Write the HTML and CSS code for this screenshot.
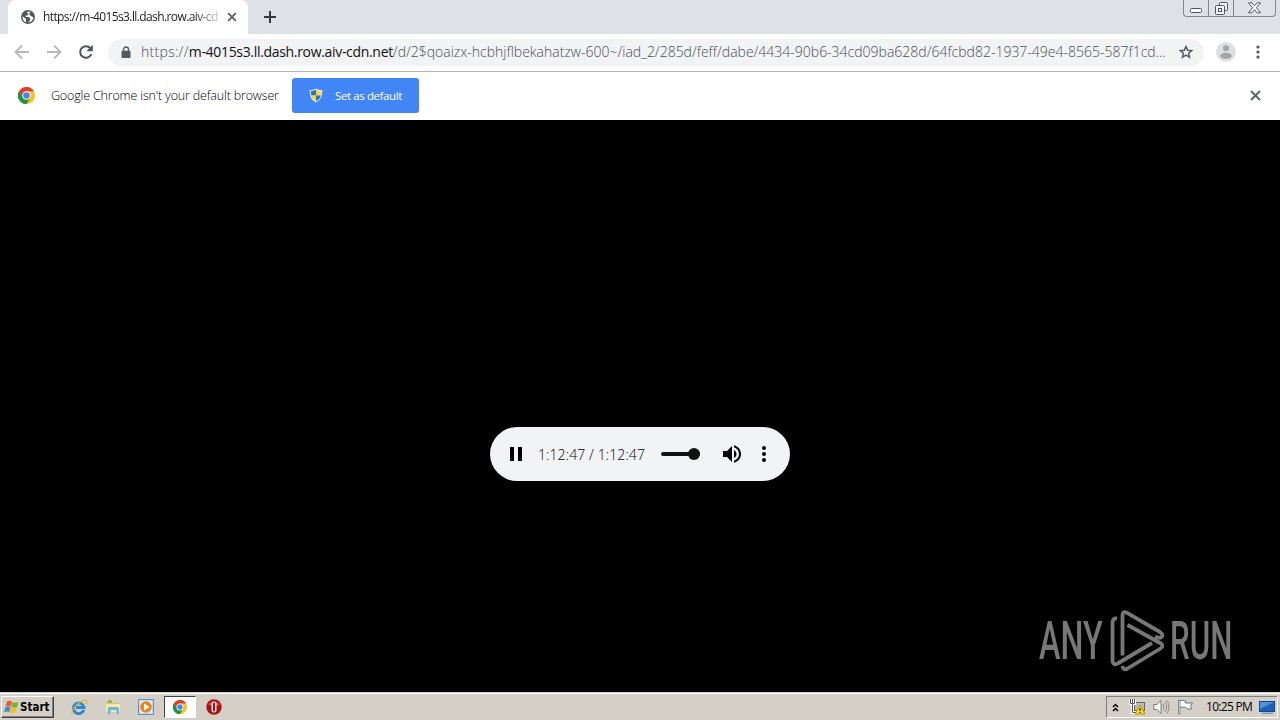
FILE: index.html
```html
<!DOCTYPE html>
<html lang="en">
<head>
  <meta charset="UTF-8">
  <meta name="viewport" content="width=device-width, initial-scale=1.0">
  <title>m-4015s3.ll.dash.row.aiv-cdn.net</title>
  <link rel="stylesheet" href="styles.css">
</head>
<body>
  <svg class="defs" width="0" height="0">
    <symbol id="chrome" viewBox="0 0 48 48">
      <circle cx="24" cy="24" r="24" fill="#fbc116"/>
      <path d="M24 24L3.2 12A24 24 0 0 1 44.8 12H24z" fill="#e33b2e"/>
      <path d="M3.2 12A24 24 0 0 0 24 48L34.4 30 24 24 13.6 30z" fill="#229342"/>
      <path d="M3.2 12L13.6 30 24 24 24 12z" fill="#e33b2e"/>
      <path d="M3.2 12L13.6 30 24 36 24 48A24 24 0 0 1 3.2 12z" fill="#229342"/>
      <circle cx="24" cy="24" r="12" fill="#fff"/>
      <circle cx="24" cy="24" r="9.2" fill="#4285f4"/>
    </symbol>
  </svg>

  <div class="tabstrip">
    <div class="tab">
      <svg class="globe" width="14" height="14" viewBox="0 0 14 14">
        <circle cx="7" cy="7" r="7" fill="#54585d"/>
        <path d="M1.5 6.2L5 9v3.2C2.800 11.500 1.300 9.500 1.500 6.200zM5.500 2l3.700-.6-.2 1.800-2 .6-.4 1.600H4.800L4.600 7h3.200l1.600 1.800-.6 1.600-1.500 2c3-.2 5-2.400 5-5.200L9.800 6 8.600 4.800z" fill="#fff"/>
      </svg>
      <span class="tab-title">https://m-4015s3.ll.dash.row.aiv-cd</span>
      <svg class="tab-close" width="10" height="10" viewBox="0 0 10 10"><path d="M1.200 1.200l7.600 7.600M8.800 1.200L1.200 8.800" stroke="#55595e" stroke-width="1.700"/></svg>
    </div>
    <svg class="new-tab" width="12" height="12" viewBox="0 0 12 12"><path d="M6 0v12M0 6h12" stroke="#34373b" stroke-width="2"/></svg>
    <div class="window-buttons">
      <span class="win-btn"><svg width="12" height="12" viewBox="0 0 12 12"><rect x=".5" y="6.500" width="11" height="4" rx="1" fill="#fff" stroke="#50545c"/></svg></span>
      <span class="win-btn"><svg width="13" height="13" viewBox="0 0 13 13" fill="#f4f5f7" stroke="#50545c"><rect x="4.500" y=".5" width="8" height="8" rx="1"/><rect x=".5" y="3.500" width="9" height="9" rx="1"/><rect x="3.500" y="6.500" width="3" height="3"/></svg></span>
      <span class="win-btn win-close"><svg width="13" height="12" viewBox="0 0 13 12"><path d="M.5.800h3.300l2.700 3 2.700-3h3.300L8.400 5.700l4.100 5.100H9.200L6.500 7.700l-2.700 3.100H.5l4.100-5.100z" fill="#fff" stroke="#50545c"/></svg></span>
    </div>
  </div>

  <div class="toolbar">
    <svg class="nav-icon" width="16" height="16" viewBox="0 0 16 16"><path d="M15 8H2M8 1.500L1.500 8 8 14.500" fill="none" stroke="#b6b8ba" stroke-width="1.800"/></svg>
    <svg class="nav-icon" width="16" height="16" viewBox="0 0 16 16"><path d="M1 8h13M8 1.500L14.500 8 8 14.500" fill="none" stroke="#b6b8ba" stroke-width="1.800"/></svg>
    <svg class="nav-icon" width="16" height="16" viewBox="0 0 16 16"><path d="M13.300 10.200A5.800 5.800 0 1 1 12.200 4" fill="none" stroke="#505459" stroke-width="2"/><path d="M14.800.8v6.400H8.400z" fill="#505459"/></svg>
    <div class="omnibox">
      <svg class="lock" width="10" height="13" viewBox="0 0 10 13"><path d="M2.500 5.500V3.500a2.500 2.500 0 0 1 5 0v2" fill="none" stroke="#565a5f" stroke-width="1.400"/><rect x=".5" y="4.800" width="9" height="7.200" rx="1" fill="#565a5f"/></svg>
      <div class="url"><span class="scheme">https://</span><span class="host">m-4015s3.ll.dash.row.aiv-cdn.net</span><span class="path">/d/2$qoaizx-hcbhjflbekahatzw-600~/iad_2/285d/feff/dabe/4434-90b6-34cd09ba628d/64fcbd82-1937-49e4-8565-587f1cd...</span></div>
      <svg class="star" width="14" height="14" viewBox="0 0 14 14"><path d="M7 1.500l1.650 3.700 4.050.4-3.050 2.700.9 4L7 10.200l-3.550 2.100.9-4L1.300 5.600l4.050-.4z" fill="none" stroke="#55595e" stroke-width="1.500"/></svg>
    </div>
    <svg class="avatar" width="20" height="20" viewBox="0 0 20 20"><circle cx="10" cy="10" r="10" fill="#dedfe0"/><circle cx="10" cy="6.300" r="3" fill="#a3a5a7"/><ellipse cx="10" cy="13.800" rx="5.800" ry="3" fill="#a3a5a7"/></svg>
    <svg class="menu" width="4" height="14" viewBox="0 0 4 14" fill="#505459"><circle cx="2" cy="2" r="1.600"/><circle cx="2" cy="7" r="1.600"/><circle cx="2" cy="12" r="1.600"/></svg>
  </div>

  <div class="infobar">
    <svg class="info-logo" width="17" height="17"><use href="#chrome"/></svg>
    <span class="info-text">Google Chrome isn't your default browser</span>
    <button class="default-btn">
      <svg width="14" height="15" viewBox="0 0 14 15">
        <path d="M7 .5C5 1.800 3 2 .700 2c0 5.500.8 9.500 6.300 12.500C12.500 11.500 13.300 7.500 13.300 2 11 2 9 1.800 7 .5z" fill="#e4e8ea"/>
        <path d="M7 1.800C5.300 2.800 3.800 3 1.900 3.100L2.200 7.500H7z" fill="#2d73b9"/>
        <path d="M7 1.800c1.700 1 3.200 1.200 5.100 1.300L11.800 7.500H7z" fill="#fcd632"/>
        <path d="M2.200 7.500H7v5.800C4.200 11.700 2.700 10 2.200 7.500z" fill="#fcd632"/>
        <path d="M11.800 7.500H7v5.800c2.800-1.600 4.300-3.300 4.800-5.800z" fill="#2d73b9"/>
      </svg>
      <span>Set as default</span>
    </button>
    <svg class="info-close" width="11" height="11" viewBox="0 0 11 11"><path d="M1 1l9 9M10 1l-9 9" stroke="#5f6368" stroke-width="1.900"/></svg>
  </div>

  <div class="page">
    <div class="player">
      <svg class="pause" width="12" height="14" viewBox="0 0 12 14"><path d="M0 0h4v14H0zM8 0h4v14H8z"/></svg>
      <span class="time">1:12:47 / 1:12:47</span>
      <div class="volume"><span class="thumb"></span></div>
      <svg class="speaker" width="18" height="18" viewBox="3 3 18 18"><path d="M3 9v6h4l5 5V4L7 9H3zm13.500 3c0-1.770-1.020-3.290-2.500-4.030v8.050c1.480-.73 2.500-2.250 2.500-4.020zM14 3.230v2.060c2.890.86 5 3.540 5 6.710s-2.110 5.850-5 6.710v2.060c4.010-.91 7-4.490 7-8.770s-2.990-7.860-7-8.770z"/></svg>
      <svg class="more" width="4" height="16" viewBox="0 0 4 16"><circle cx="2" cy="2" r="2"/><circle cx="2" cy="8" r="2"/><circle cx="2" cy="14" r="2"/></svg>
    </div>
    <div class="watermark">
      <span class="wm-text wm-any">ANY</span>
      <svg class="wm-logo" width="56" height="64" viewBox="0 0 56 64" fill="none" stroke="#777" stroke-width="3.800" stroke-linejoin="round">
        <path d="M12.500 46.500V6.500Q12.500 1.500 17 3.800L50 23Q54.500 26.500 50.500 28.500Q48.500 29.500 45 27.500"/>
        <path d="M7 9.500Q2.500 9 2.500 14V51Q3 57.500 8.500 54L42 34"/>
        <path d="M17.500 16L51 34.500Q54 37 50.500 39.500L17.500 59.500Q13 62 12.500 57"/>
      </svg>
      <span class="wm-text wm-run">RUN</span>
    </div>
  </div>

  <div class="taskbar">
    <button class="start">
      <svg width="16" height="15" viewBox="0 0 16 15">
        <path d="M3 1.500q2.500-1.500 5 0L6.800 6.600Q4.300 5.200 1.600 6.600z" fill="#ee5a24"/>
        <path d="M8.500 2q2.800 1.500 6 0l-1.400 5q-3 1.600-5.800 0z" fill="#74b52d"/>
        <path d="M1.400 7.200q2.600-1.400 5.100 0l-1.300 5Q2.600 10.800 0 12.200z" fill="#3c87d8"/>
        <path d="M7 7.600q3 1.500 5.800 0l-1.400 5q-3 1.500-5.800 0z" fill="#f9bd17"/>
      </svg>
      <span>Start</span>
    </button>
    <div class="quick">
      <svg width="17" height="16" viewBox="0 0 17 16">
        <path d="M12.800 11A5.300 5.300 0 1 1 13 8.500H5" fill="none" stroke="#2789d8" stroke-width="2.900"/>
        <path d="M1.500 15C-1 12 8 1.500 14.500 1.200c2.500 0 1.500 3 .5 4" fill="none" stroke="#e5b325" stroke-width="1.200"/>
      </svg>
      <svg width="16" height="16" viewBox="0 0 16 16">
        <path d="M1 2.500h5l1 1.500h7v9H1z" fill="#e8c65d"/><path d="M3 1h4v3H3z" fill="#83bb60"/><path d="M1 5h14v8H1z" fill="#f8e7a0"/>
        <path d="M3 15V9.500q0-1.500 1.500-1.500h8q1.500 0 1.500 1.500V15h-2.500v-4h-6v4z" fill="#68b7e5"/>
      </svg>
      <svg width="16" height="16" viewBox="0 0 16 16"><rect x=".5" y=".5" width="15" height="15" fill="#b9d9f0" stroke="#5896c9"/><rect x="2" y="2" width="12" height="12" fill="#e3edf5"/><circle cx="8" cy="8" r="5.800" fill="#f08114"/><path d="M6 4.500L11.500 8 6 11.500z" fill="#fff"/></svg>
      <span class="task-active"><svg width="14" height="14"><use href="#chrome"/></svg></span>
      <svg width="16" height="16" viewBox="0 0 16 16"><circle cx="8" cy="8" r="7.700" fill="#a81216"/><path d="M2 5.500a7 6 0 0 1 12 0q-6 3-12 0z" fill="#d04a4a"/><rect x="5.500" y="2.500" width="5" height="11" rx="2.500" fill="#f7e6e5"/><rect x="7" y="3.500" width="2" height="9" rx="1" fill="#a90e13"/></svg>
    </div>
    <div class="tray">
      <svg class="chevrons" width="7" height="9" viewBox="0 0 7 9"><path d="M1 4l2.500-2.500L6 4M1 8l2.500-2.500L6 8" fill="none" stroke="#000" stroke-width="1.500"/></svg>
      <svg class="network" width="17" height="16" viewBox="0 0 17 16">
        <rect x="5.500" y="3.500" width="10" height="8" fill="#b9bbb9" stroke="#666"/><path d="M1.500 1v3.500h4V1M3.500 5v8.500H8M3.500 0v3" fill="none" stroke="#fff" stroke-width="3"/><path d="M1.500 0v4.500h4V0M3.500 0v13.500H8" fill="none" stroke="#555"/>
        <path d="M11 6l5 9H6z" fill="#ffe400" stroke="#b99500"/><path d="M11 9v3M11 13v1" stroke="#222" stroke-width="1.300"/>
      </svg>
      <svg class="sound" width="17" height="16" viewBox="0 0 17 16"><path d="M.8 5.500h3L8 1.500v13l-4.200-4h-3z" fill="#fff" stroke="#77797b"/><path d="M10 5q2 3 0 6M12 3q3.500 5 0 10M14 1.500q4 6.500 0 13" fill="none" stroke="#898b8d"/></svg>
      <svg class="flag" width="17" height="16" viewBox="0 0 17 16"><path d="M2.500 2q3-1.500 6 0v2h7l-2 3 1 3q-4 1-6-1.500-3-1-6 0z" fill="#fff" stroke="#6c6e70"/><path d="M1.500 1h1.500v14H1.500z" fill="#fff" stroke="#6c6e70" stroke-width=".8"/></svg>
      <span class="clock">10:25 PM</span>
      <svg class="desktop" width="16" height="13" viewBox="0 0 16 13"><rect x=".5" y=".5" width="15" height="10" fill="#1b62ba" stroke="#164886"/><path d="M1 1h14L1 8z" fill="#4c94dd"/><path d="M3 12.300h11" stroke="#7a98b8" stroke-width="1.400"/></svg>
    </div>
  </div>
</body>
</html>
```
FILE: styles.css
```css
* {
  box-sizing: border-box;
}
body {
  margin: 0;
  width: 1280px;
  height: 720px;
  overflow: hidden;
  display: flex;
  flex-direction: column;
  background: #000;
  font-family: "Open Sans", "Noto Sans", sans-serif;
  font-size: 12px;
  font-weight: 300;
  color: #222;
}
svg {
  display: block;
  flex: none;
}
.defs {
  display: none;
}
span {
  white-space: nowrap;
}
button {
  margin: 0;
  font-family: inherit;
}

/* Tabs */
.tabstrip {
  height: 34px;
  flex: none;
  display: flex;
  background: #dee1e6;
  padding-left: 8px;
}
.tab {
  width: 240px;
  height: 34px;
  display: flex;
  align-items: center;
  padding: 0 11px 0 13px;
  background: #fff;
  border-radius: 8px 8px 0 0;
}
.tab-title {
  width: 176px;
  margin: 0 9px 0 8px;
  padding-bottom: 1px;
  font-size: 12px;
  font-weight: 400;
  letter-spacing: -0.6px;
  -webkit-mask-image: linear-gradient(to right, #000 150px, transparent 182px);
}
.new-tab {
  margin: 11px 0 0 16px;
}
.window-buttons {
  display: flex;
  height: 17px;
  margin: 0 4px 0 auto;
  border: 1px solid #83868d;
  border-top: none;
  border-radius: 0 0 4px 4px;
}
.win-btn {
  width: 25px;
  display: flex;
  align-items: center;
  justify-content: center;
  border-right: 1px solid #83868d;
}
.win-close {
  width: 41px;
  border-right: none;
}

/* Toolbar */
.toolbar {
  height: 38px;
  flex: none;
  display: flex;
  align-items: center;
  padding: 0 20px 1px 14px;
  background: #fff;
  border-bottom: 1px solid #b3b5b3;
}
.nav-icon {
  margin-right: 16px;
}
.omnibox {
  width: 1096px;
  height: 27px;
  margin-left: -2px;
  display: flex;
  align-items: center;
  padding: 0 11px 0 13px;
  border-radius: 14px;
  background: #f1f3f4;
}
.url {
  width: 1038px;
  margin-left: 10px;
  padding-bottom: 1px;
  font-size: 14px;
  white-space: nowrap;
  color: #4c5054;
}
.scheme {
  letter-spacing: 0.3px;
}
.host {
  color: #111;
  font-weight: 400;
  letter-spacing: -0.32px;
}
.path {
  letter-spacing: 0;
}
.avatar {
  margin-left: 12px;
}
.menu {
  margin-left: auto;
}

/* Default browser bar */
.infobar {
  height: 48px;
  flex: none;
  display: flex;
  align-items: center;
  padding: 0 19px 1px 18px;
  background: #fff;
}
.info-text {
  width: 229px;
  margin: 0 12px 0 16px;
  padding-bottom: 1px;
  font-size: 12.5px;
  letter-spacing: -0.17px;
  color: #000;
}
.default-btn {
  width: 127px;
  height: 35px;
  display: flex;
  align-items: center;
  gap: 12px;
  padding: 0 0 1px 17px;
  border: none;
  border-radius: 3px;
  background: #4285f4;
  color: #fff;
  font-size: 11.5px;
  letter-spacing: -0.4px;
}
.info-close {
  margin-left: auto;
}

/* Media page */
.page {
  position: relative;
  flex: 1;
  display: flex;
  justify-content: center;
  align-items: flex-start;
  padding-top: 307px;
  background: #000;
}
.player {
  width: 300px;
  height: 54px;
  display: flex;
  align-items: center;
  padding: 0 24px 0 20px;
  border-radius: 27px;
  background: #f1f3f4;
}
.time {
  width: 107px;
  margin: 0 16px;
  font-size: 14px;
  letter-spacing: 0.1px;
  color: #000;
}
.volume {
  width: 39px;
  height: 4px;
  display: flex;
  align-items: center;
  justify-content: flex-end;
  border-radius: 2px;
  background: #111;
}
.thumb {
  width: 12px;
  height: 12px;
  border-radius: 50%;
  background: #111;
}
.speaker {
  margin-left: 23px;
}
.more {
  margin-left: auto;
}
.watermark {
  position: absolute;
  right: 47px;
  bottom: 19px;
  width: 194px;
  height: 64px;
  display: flex;
  align-items: center;
  color: #777;
}
.wm-text {
  width: 64px;
  font-family: "Roboto", sans-serif;
  font-size: 53px;
  font-weight: 500;
  line-height: 64px;
  transform-origin: left center;
  transform: scaleX(0.59);
}
.wm-any {
  transform: scaleX(0.61);
}
.wm-logo {
  margin: 0 4px 0 7px;
}

/* Taskbar */
.taskbar {
  height: 28px;
  flex: none;
  display: flex;
  align-items: center;
  padding: 1px 2px 0 1px;
  background: #d4d0c8;
  border-top: 1px solid #d4d0c8;
  box-shadow: inset 0 1px 0 #fff;
}
.start {
  width: 53px;
  height: 22px;
  display: flex;
  align-items: center;
  gap: 0;
  padding: 0 0 0 2px;
  border: 1px solid;
  border-color: #fff #404040 #404040 #fff;
  box-shadow: inset -1px -1px 0 #808080;
  background: #d4d0c8;
  font-family: "DejaVu Sans Condensed", "DejaVu Sans", sans-serif;
  font-size: 11.5px;
  font-weight: bold;
  color: #000;
}
.quick {
  display: flex;
  align-items: center;
  gap: 17px;
  margin-left: 17px;
}
.task-active {
  width: 32px;
  height: 22px;
  margin: 0 -7px;
  display: flex;
  align-items: center;
  justify-content: center;
  background: #fff;
  border: 1px solid;
  border-color: #404040 #fff #fff #404040;
}
.tray {
  width: 172px;
  height: 22px;
  display: flex;
  align-items: center;
  margin-left: auto;
  padding: 0 2px 0 5px;
  border: 1px solid;
  border-color: #808080 #fff #fff #808080;
  color: #000;
}
.network {
  margin-left: 10px;
}
.sound,
.flag {
  margin-left: 7px;
}
.clock {
  width: 46px;
  margin-left: 12px;
  padding-bottom: 1px;
  font-size: 12px;
  font-weight: 400;
  letter-spacing: -0.7px;
}
.desktop {
  margin-left: auto;
}
```
